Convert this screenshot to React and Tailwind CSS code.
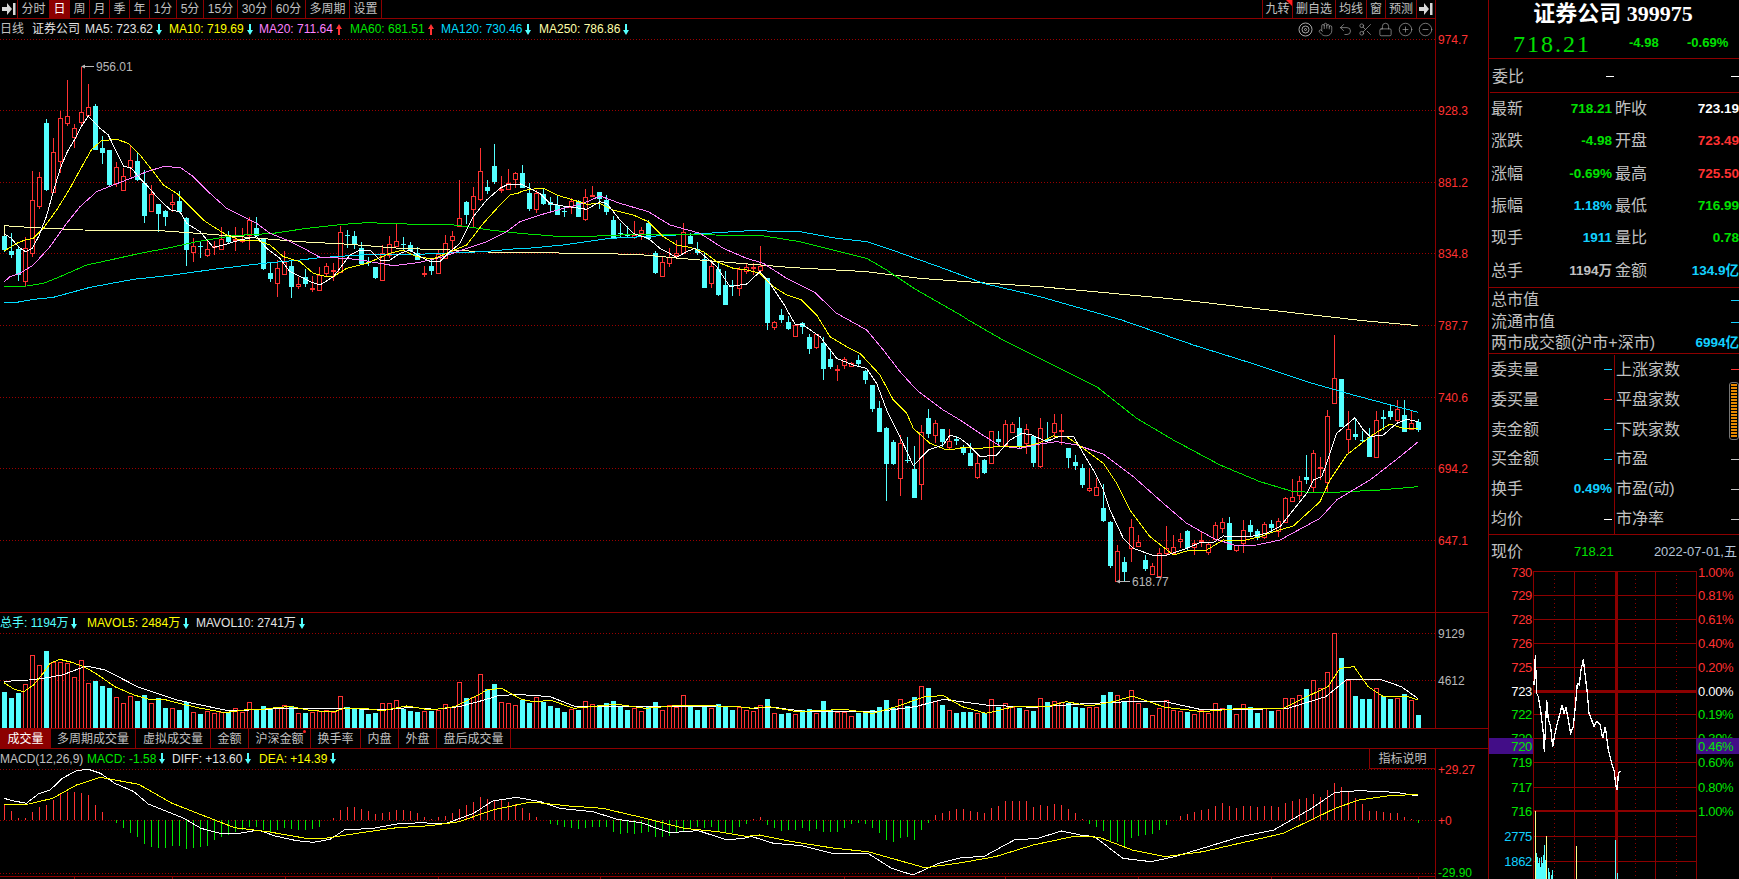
import React from "react";
import { Hand, Undo2, Scissors, Lock, CirclePlus, CircleMinus } from "lucide-react";

const RED = "#ff3232";
const CYAN = "#54ffff";
const GREEN = "#00e600";
const GRID = "#9a0000";
const FRAME = "#8c0000";

// Daily candles: [high, body top, body bottom, low, rising]; each block has its own plot scale.
const candlesA = [
  [520,528,570,575,0],[520,573,585,594,0],[560,567,645,662,0],[530,563,662,678,1],[333,421,578,590,1],[335,352,437,447,1],[178,189,390,392,0],[235,277,395,397,1],[153,175,302,340,1],[60,169,188,197,1],
  [193,205,231,263,1],[20,157,185,197,1],[72,142,164,170,1],[132,138,270,270,0],[228,264,278,312,0],[270,271,375,378,0],[305,322,368,382,1],[325,349,389,389,1],[258,301,321,350,1],[280,303,360,362,0],
  [330,369,467,488,0],[375,403,453,455,1],[432,432,461,515,0],[450,453,470,497,0],[403,427,431,455,1],[393,423,455,458,0],[470,474,570,617,0],[535,559,577,605,1],[545,558,561,594,0],[540,566,584,590,1],
  [543,558,562,585,1],[500,538,566,567,1],[513,527,546,548,0],[502,537,541,573,1],[505,538,543,550,1],[470,481,525,570,1],[472,504,528,530,0],[534,536,628,630,0],[608,639,657,665,0],[600,625,668,710,1],
  [573,605,641,642,1],[600,618,681,714,0],[650,673,678,688,1],[627,652,671,682,0],[648,684,688,695,1],[622,646,690,692,1],[608,618,638,652,1],[608,630,633,663,1],[498,517,635,635,1],[510,525,529,563,0],
  [513,528,554,568,0],[547,564,612,614,0],[590,605,608,618,0],[620,622,654,658,0],[556,580,659,660,1],[528,553,585,595,1],[490,544,557,558,1],[530,552,555,570,0],[545,556,573,575,0],[560,580,599,600,0],
  [618,638,642,650,1],[600,618,633,645,0],[570,582,638,638,1],[525,550,595,597,1],[513,529,541,578,1],[360,475,497,497,1],[423,426,464,492,0],[380,409,446,505,1],[265,334,416,423,1],[360,381,393,402,0],
  [252,318,365,373,0],[348,387,391,400,1],[328,370,386,388,1],[335,340,358,385,1],
];
const candlesB = [
  [-15,8,53,55,0],[40,68,118,122,0],[60,70,117,130,1],[55,72,102,106,0],[82,96,104,130,0],[75,105,135,136,0],[108,123,125,140,0],[85,92,112,133,1],[90,92,140,141,0],[58,80,147,153,1],
  [48,75,78,82,1],[67,67,88,118,0],[75,90,125,135,0],[138,150,205,207,0],[160,190,193,200,0],[168,195,198,203,0],[153,195,202,206,1],[170,181,188,210,1],[150,160,208,210,0],[243,250,309,312,0],
  [258,277,317,317,1],[235,262,278,290,1],[210,250,256,265,1],[158,187,250,252,1],[188,198,222,223,0],[216,238,248,255,0],[250,268,353,354,0],[272,288,338,353,1],[272,298,375,378,0],[303,345,404,405,0],
  [330,345,348,378,0],[292,298,353,378,1],[280,290,303,312,1],[280,290,293,315,1],[228,288,299,300,1],[323,323,459,480,0],[452,455,472,480,1],[417,435,450,458,0],[438,456,477,480,0],[462,465,497,498,1],
  [455,460,470,492,0],[492,501,537,552,0],[492,493,530,538,1],[500,519,597,630,0],[543,568,592,598,0],[585,597,600,634,1],[562,566,585,597,1],[575,580,587,589,1],[555,570,583,590,0],[600,603,630,642,0],
  [645,645,717,725,0],[693,714,785,786,0],[770,775,881,993,0],[810,815,882,885,0],[795,820,925,978,1],[800,870,873,878,0],[828,897,983,984,0],[765,787,943,990,1],[717,745,792,805,0],[750,760,796,818,1],
  [778,778,815,830,0],[778,812,830,838,1],[797,808,812,826,0],
];
const candlesC = [
  [375,383,400,405,0],[368,400,437,438,0],[400,428,470,478,1],[418,420,460,462,0],[333,333,430,432,1],[333,358,365,380,0],[300,313,375,380,1],[305,313,337,340,1],[292,323,378,388,0],[312,328,368,402,1],[347,349,428,440,0],[295,325,437,443,1],
  [305,358,362,365,0],[282,310,335,355,1],[283,330,333,375,1],[385,385,413,443,0],[405,427,437,450,0],[432,445,495,505,0],[443,505,510,515,1],[475,500,524,525,1],[492,564,603,605,0],[603,606,738,745,0],
  [675,694,782,785,1],[712,727,757,785,0],[598,622,683,725,1],[645,667,677,682,1],[706,720,747,752,0],[728,739,762,763,1],[685,700,767,770,1],[618,683,700,705,1],[645,680,700,703,1],[640,658,662,685,1],
  [630,633,684,690,0],[660,670,682,705,1],[636,661,664,680,1],[665,672,695,705,1],[605,616,658,660,1],[594,607,623,640,1],[592,609,689,690,0],[675,676,690,695,1],[600,630,670,698,1],[600,616,635,650,0],
  [628,633,655,660,0],[605,611,650,658,1],[600,613,624,640,0],[595,604,632,650,1],[530,535,605,610,1],[478,532,542,545,1],[468,484,524,540,1],[405,471,480,492,0],[390,400,502,515,1],[410,441,445,480,1],
  [270,289,485,520,1],[45,175,250,252,1],[178,178,320,322,0],[273,328,358,400,1],[293,342,351,360,0],[332,360,362,370,0],[325,350,410,412,0],[273,301,412,413,1],[270,292,296,330,0],[255,273,292,300,0],
  [240,266,300,312,1],[240,286,335,336,0],[273,310,327,330,1],[298,307,330,336,0],
];

const candles = [
  ...candlesA.map((c) => c.map((v, k) => (k < 4 ? 60 + v / 3 : v))),
  ...candlesB.map((c) => c.map((v, k) => (k < 4 ? 170 + v / 3 : v))),
  ...candlesC.map((c) => c.map((v, k) => (k < 4 ? 320 + v / 3 : v))),
];

// Turnover bar tops, oldest first.
const volumeTops = [
  276,294,279,252,165,195,153,185,187,190,232,181,249,243,258,264,292,310,288,303,285,309,295,323,324,330,307,336,342,332,
  340,335,337,324,335,307,330,318,325,322,315,317,340,338,336,332,330,336,289,322,328,328,342,340,310,310,300,327,333,336,
  334,334,330,313,320,247,295,292,222,268,253,306,308,316,300,310,290,305,317,323,336,327,330,304,313,316,310,303,317,330,
  325,333,320,306,330,316,320,285,320,330,320,325,312,320,330,320,330,
  333,316,297,340,342,340,343,330,328,338,303,330,336,336,348,340,340,331,322,300,323,297,318,291,258,264,303,315,330,340,
  335,335,338,340,297,322,310,320,325,330,332,295,305,303,307,310,322,323,320,320,285,276,285,305,270,308,323,345,323,300,
  330,333,337,342,330,338,310,325,315,342,313,322,338,323,332,330,295,295,285,267,240,263,217,100,174,240,288,298,297,265,
  287,297,295,283,300,345,
];

// MACD histogram ends around the zero line (661 on this scale).
const macdBars = [
  615,633,655,653,637,620,615,600,583,575,575,580,585,615,635,661,670,685,700,710,733,740,743,743,738,738,747,745,742,738,
  720,710,705,695,690,680,680,690,695,690,685,688,690,690,688,680,661,655,630,620,620,628,632,643,638,635,630,630,632,640,
  652,656,652,648,640,628,615,605,592,598,600,600,605,612,625,640,650,660,672,675,682,683,688,685,680,680,680,695,702,700,
  702,700,695,710,712,708,700,692,688,682,685,680,695,695,700,680,672,
  658,652,675,685,692,690,690,685,692,688,695,695,695,685,672,670,672,685,700,720,725,715,712,720,690,668,645,640,633,628,
  628,632,635,640,625,617,603,603,603,603,620,615,618,613,615,628,640,658,
  672,680,693,725,725,737,715,708,705,703,690,675,661,648,642,635,630,628,618,610,618,625,618,618,620,618,618,620,608,603,
  598,595,583,590,570,550,562,575,595,612,632,633,637,640,640,652,658,668,
];

// Moving-average traces, one point list per plot scale.
const ma5 = [
  [[13,521],[34,535],[55,560],[76,575],[97,565],[118,525],[139,470],[160,395],[181,325],[202,275],[223,240],[244,200],[265,168],[300,205],[325,225],[370,318],[395,325],[420,355],[440,375],[470,410],[490,430],[512,450],[540,455],[560,490],[600,515],[640,562],[680,552],[720,540],[770,530],[800,565],[840,595],[870,635],[900,650],[930,665],[960,675],[1000,650],[1020,625],[1050,585],[1080,570],[1110,570],[1140,600],[1170,600],[1200,580],[1230,570],[1260,590],[1290,605],[1320,605],[1350,575],[1380,550],[1420,470],[1460,420],[1500,385],[1525,372],[1560,372]],
  [[0,40],[30,55],[60,70],[90,100],[130,108],[160,112],[200,118],[240,95],[260,100],[300,150],[340,190],[385,205],[420,235],[470,262],[500,245],[525,235],[550,255],[590,290],[630,350],[680,342],[720,305],[750,340],[790,400],[825,462],[850,465],[900,500],[950,565],[1000,585],[1040,595],[1070,640],[1100,720],[1140,800],[1180,887],[1225,840],[1270,825],[1290,795],[1320,805]],
  [[0,355],[20,370],[60,410],[110,405],[150,360],[185,340],[215,345],[260,365],[300,348],[340,348],[370,400],[400,450],[430,510],[450,570],[490,655],[520,685],[575,705],[620,705],[680,685],[720,668],[760,668],[790,648],[830,650],[870,650],[920,640],[960,620],[1000,570],[1040,520],[1060,480],[1085,470],[1100,430],[1130,340],[1185,293],[1210,330],[1230,350],[1270,345],[1310,310],[1340,298],[1375,305]],
];
const ma10 = [
  [[13,573],[50,550],[75,540],[100,535],[130,505],[170,450],[210,385],[240,330],[275,268],[305,242],[350,238],[385,250],[420,285],[460,335],[490,375],[530,400],[570,440],[610,480],[640,500],[680,525],[720,540],[770,540],[810,555],[850,590],[900,605],[940,640],[980,650],[1000,650],[1040,625],[1100,610],[1170,580],[1210,570],[1250,590],[1300,597],[1350,575],[1400,555],[1450,490],[1500,435],[1530,405],[1560,398]],
  [[0,65],[30,58],[70,55],[110,75],[160,90],[200,103],[240,100],[280,120],[340,135],[385,155],[430,200],[470,225],[510,232],[550,245],[590,275],[640,295],[680,300],[720,310],[760,350],[800,375],[845,390],[890,435],[930,500],[980,530],[1020,550],[1080,615],[1120,690],[1160,730],[1180,775],[1230,820],[1280,840],[1320,835]],
  [[0,383],[60,385],[110,380],[160,380],[200,378],[240,368],[280,348],[320,350],[370,385],[430,430],[470,490],[510,570],[570,650],[640,705],[690,690],[740,690],[790,660],[850,662],[900,650],[950,632],[1000,618],[1080,545],[1110,480],[1160,405],[1230,350],[1290,312],[1330,325],[1375,325]],
];
const ma20 = [
  [[13,665],[30,650],[60,640],[100,615],[150,560],[200,490],[240,440],[290,395],[340,375],[400,352],[440,335],[490,320],[540,322],[580,350],[630,400],[680,445],[720,465],[770,490],[810,520],[860,540],[920,570],[960,592],[1040,595],[1100,603],[1180,617],[1260,607],[1330,590],[1400,565],[1460,545],[1520,515],[1560,485]],
  [[0,155],[60,135],[120,118],[190,100],[240,78],[300,100],[385,125],[450,165],[540,190],[610,235],[680,265],[730,280],[800,325],[885,368],[950,430],[1040,480],[1090,540],[1140,605],[1190,660],[1270,720]],
  [[0,300],[60,340],[120,378],[180,385],[240,372],[290,365],[350,375],[430,402],[520,470],[610,550],[680,610],[760,655],[830,678],[890,675],[960,660],[1080,595],[1130,540],[1230,480],[1320,410],[1375,365]],
];
const ma60 = [
  [[13,680],[80,678],[130,670],[180,650],[260,615],[330,600],[420,580],[500,565],[590,545],[700,527],[820,520],[920,505],[1030,493],[1100,488],[1220,492],[1340,492],[1400,500],[1470,510],[1560,520]],
  [[0,190],[100,198],[230,198],[350,193],[480,193],[585,195],[725,197],[840,215],[940,240],[1040,265],[1100,300],[1190,360],[1330,440]],
  [[25,0],[120,55],[250,120],[410,200],[530,295],[640,360],[780,435],[900,485],[1000,515],[1100,518],[1260,510],[1375,500]],
];
const ma120 = [
  [[13,727],[50,727],[100,718],[160,712],[270,682],[400,658],[520,645],[640,628],[790,610],[900,600],[960,593],[1080,585],[1250,583],[1450,575],[1560,565]],
  [[0,237],[130,225],[270,205],[430,197],[560,190],[690,182],[840,185],[950,205],[1040,215],[1130,245],[1270,295],[1390,340],[1560,380]],
  [[485,0],[700,75],[860,125],[1040,185],[1180,225],[1375,277]],
];
const ma250 = [
  [[13,528],[13,497],[100,503],[250,510],[480,512],[620,522],[780,535],[900,545],[1050,553],[1200,565],[1350,570],[1500,578],[1560,578]],
  [[0,247],[350,253],[480,265],[660,280],[820,293],[1040,305],[1200,325],[1380,338],[1560,350]],
  [[651,-62],[927,-30],[1209,2],[1375,17]],
];

const toPlot = ([a, b, c]) =>
  [
    ...a.map(([x, y]) => [x / 3, 60 + y / 3]),
    ...b.map(([x, y]) => [520 + x / 3, 170 + y / 3]),
    ...c.map(([x, y]) => [960 + x / 3, 320 + y / 3]),
  ]
    .map((p) => p.join(","))
    .join(" ");

const toLower = (a, b) =>
  [
    ...a.map(([x, y]) => [x / 2.0907, 600 + y / 3]),
    ...b.map(([x, y]) => [750 + x / 2.119, 600 + y / 3]),
  ]
    .map((p) => p.join(","))
    .join(" ");

const volMa5 = toLower(
  [[8,248],[30,268],[50,275],[70,255],[90,220],[105,190],[125,178],[150,187],[175,200],[200,220],[240,260],[280,285],[310,297],[340,297],[380,312],[420,325],[470,338],[510,330],[550,328],[580,322],[610,320],[650,332],[700,335],[720,324],[760,325],[800,332],[850,318],[900,330],[950,320],[1000,285],[1020,268],[1050,266],[1090,298],[1120,306],[1150,300],[1200,325],[1250,318],[1290,313],[1350,325],[1430,315],[1500,318],[1565,322]],
  [[0,325],[40,320],[100,335],[200,328],[260,340],[310,320],[370,290],[410,287],[450,320],[500,340],[560,320],[630,320],[670,305],[720,318],[770,305],[810,288],[880,322],[960,335],[1040,325],[1130,325],[1180,290],[1225,260],[1250,205],[1280,200],[1310,260],[1340,288],[1390,288],[1415,300]]
);
const volMa10 = toLower(
  [[8,245],[30,242],[60,240],[90,235],[130,225],[180,198],[220,210],[290,262],[370,300],[420,315],[470,330],[520,330],[600,325],[660,325],[720,325],[800,330],[860,322],[910,328],[960,320],[1000,305],[1040,288],[1080,283],[1150,290],[1200,318],[1300,318],[1400,320],[1500,318],[1565,322]],
  [[0,325],[50,322],[120,335],[200,335],[270,335],[350,320],[410,298],[500,315],[600,322],[700,312],[800,305],[880,305],[960,330],[1060,328],[1140,325],[1220,290],[1265,238],[1340,240],[1380,260],[1415,295]]
);
const diff = toLower(
  [[8,595],[30,603],[55,610],[80,582],[105,570],[130,535],[160,512],[185,508],[210,520],[240,550],[280,575],[310,612],[350,635],[385,655],[420,685],[460,700],[500,700],[540,690],[575,708],[620,722],[655,727],[690,718],[720,690],[780,685],[830,672],[880,668],[930,672],[990,640],[1030,603],[1080,592],[1130,605],[1170,625],[1240,635],[1290,658],[1340,668],[1400,698],[1460,692],[1520,720],[1565,713]],
  [[0,708],[50,730],[110,737],[180,762],[250,760],[300,805],[345,825],[400,790],[450,772],[495,770],[560,720],[610,715],[660,693],[700,705],[730,710],[790,775],[850,785],[900,770],[970,740],[1040,710],[1110,690],[1190,625],[1240,577],[1290,572],[1370,577],[1415,588]]
);
const dea = toLower(
  [[8,613],[60,612],[110,595],[160,555],[210,532],[290,553],[360,610],[440,655],[490,683],[560,695],[640,715],[680,715],[760,697],[830,683],[900,677],[960,665],[1030,630],[1110,606],[1190,618],[1260,625],[1350,655],[1430,685],[1500,695],[1565,710]],
  [[0,708],[20,705],[90,725],[180,745],[250,755],[300,775],[370,803],[440,790],[520,770],[600,735],[690,708],[740,712],[810,750],[880,770],[960,755],[1130,700],[1240,625],[1290,600],[1350,588],[1415,583]]
);

const Dotted = ({ y }) => (
  <line x1="0" x2="1435" y1={y + 0.5} y2={y + 0.5} stroke={GRID} strokeDasharray="1 2" />
);

const AxisLine = ({ y1, y2 }) => <rect x="1435" y={y1} width="1" height={y2 - y1} fill={FRAME} />;

const Trace = ({ points, color, width = 1 }) => (
  <polyline points={points} fill="none" stroke={color} strokeWidth={width} shapeRendering="crispEdges" />
);

function Candle({ data, i }) {
  const [high, top, bottom, low, up] = data;
  const x = 2 + 7 * i;
  const yTop = Math.round(top);
  const yBottom = Math.max(Math.round(bottom), yTop + 1);
  const color = up ? RED : CYAN;
  return (
    <g shapeRendering="crispEdges">
      <rect x={x + 2} y={Math.round(high)} width="1" height={Math.max(1, Math.round(low) - Math.round(high))} fill={color} />
      {up ? (
        <rect x={x + 0.5} y={yTop + 0.5} width="4" height={yBottom - yTop} fill="#000" stroke={color} />
      ) : (
        <rect x={x} y={yTop} width="5" height={yBottom - yTop} fill={color} />
      )}
    </g>
  );
}

const ArrowDown = () => (
  <svg width="6" height="11" viewBox="0 0 6 11" className="ml-[3px] shrink-0">
    <polygon points="2,0 4,0 4,6 6,6 3,11 0,6 2,6" fill={CYAN} />
  </svg>
);

const ArrowUp = () => (
  <svg width="6" height="11" viewBox="0 0 6 11" className="ml-[3px] shrink-0">
    <polygon points="3,0 6,5 4,5 4,11 2,11 2,5 0,5" fill={RED} />
  </svg>
);

const PanelArrow = () => (
  <svg width="14" height="14" viewBox="0 0 14 14">
    <polygon points="0,5 5,5 5,1 10,7 5,13 5,9 0,9" fill="#d8d8d8" />
    <rect x="11" y="1" width="2.5" height="12" fill="#d8d8d8" />
  </svg>
);

const Tab = ({ className = "", children }) => (
  <div className={`flex h-full items-center justify-center border-r border-[#8c0000] text-[#c0c0c0] ${className}`}>
    {children}
  </div>
);

function Toolbar() {
  return (
    <div className="flex h-[19px] w-[1436px] justify-between border-r border-b border-[#8c0000] text-[12px]">
      <div className="flex h-full">
        <Tab className="w-[18px]"><PanelArrow /></Tab>
        <Tab className="w-[32px]">分时</Tab>
        <div className="flex h-full w-[20px] items-center justify-center border-r border-[#8c0000] bg-[#8c0000] text-white">日</div>
        <Tab className="w-[20px]">周</Tab>
        <Tab className="w-[20px]">月</Tab>
        <Tab className="w-[20px]">季</Tab>
        <Tab className="w-[20px]">年</Tab>
        <Tab className="w-[27px]">1分</Tab>
        <Tab className="w-[27px]">5分</Tab>
        <Tab className="w-[34px]">15分</Tab>
        <Tab className="w-[34px]">30分</Tab>
        <Tab className="w-[34px]">60分</Tab>
        <Tab className="w-[44px]">多周期</Tab>
        <Tab className="w-[32px]">设置</Tab>
      </div>
      <div className="flex h-full">
        <div className="relative flex h-full w-[31px] items-center justify-center border-x border-[#8c0000] text-[#c0c0c0]">
          九转
          <span className="absolute top-0 right-0 h-0 w-0 border-t-[6px] border-l-[6px] border-t-[#ff2020] border-l-transparent" />
        </div>
        <Tab className="w-[43px]">删自选</Tab>
        <Tab className="w-[31px]">均线</Tab>
        <Tab className="w-[19px]">窗</Tab>
        <Tab className="w-[31px]">预测</Tab>
        <div className="flex h-full w-[18px] items-center justify-center"><PanelArrow /></div>
      </div>
    </div>
  );
}

function PriceLegend() {
  return (
    <div className="absolute top-0 left-0 flex h-[20px] items-center text-[12px]">
      <span className="w-[32px] text-[#c0c0c0]">日线</span>
      <span className="w-[53px] text-[#e4e4e4]">证券公司</span>
      <div className="flex w-[84px] items-center text-[#e4e4e4]">MA5: 723.62<ArrowDown /></div>
      <div className="flex w-[90px] items-center text-[#ffff00]">MA10: 719.69<ArrowDown /></div>
      <div className="flex w-[91px] items-center text-[#ff80ff]">MA20: 711.64<ArrowUp /></div>
      <div className="flex w-[91px] items-center text-[#00e600]">MA60: 681.51<ArrowUp /></div>
      <div className="flex w-[98px] items-center text-[#00dcff]">MA120: 730.46<ArrowDown /></div>
      <div className="flex items-center text-[#ffffa8]">MA250: 786.86<ArrowDown /></div>
    </div>
  );
}

function ChartTools() {
  const icon = { size: 15, strokeWidth: 1.1 };
  return (
    <div className="absolute top-[2px] right-[55px] flex h-[16px] items-center gap-[5px] text-[#a8a8a8]">
      <svg width="15" height="15" viewBox="0 0 15 15" fill="none" stroke="currentColor">
        <circle cx="7.5" cy="7.5" r="6.5" />
        <circle cx="7.5" cy="7.5" r="3.5" />
        <circle cx="7.5" cy="7.5" r="1" />
      </svg>
      <Hand {...icon} />
      <Undo2 {...icon} />
      <Scissors {...icon} />
      <Lock {...icon} />
      <CirclePlus {...icon} />
      <CircleMinus {...icon} />
    </div>
  );
}

function PricePanel() {
  const grid = [
    [39, "974.7"], [110, "928.3"], [182, "881.2"], [253, "834.8"],
    [325, "787.7"], [397, "740.6"], [468, "694.2"], [540, "647.1"],
  ];
  return (
    <div className="relative h-[594px] border-b border-[#8c0000]">
      <svg width="1488" height="593" viewBox="0 19 1488 593" className="block">
        <AxisLine y1={19} y2={612} />
        {grid.map(([y, label]) => (
          <g key={y}>
            <Dotted y={y} />
            <text x="1438" y={y + 5} fontSize="12" fill={RED}>{label}</text>
          </g>
        ))}
        {candles.map((c, i) => <Candle key={i} data={c} i={i} />)}
        <Trace points={toPlot(ma250)} color="#ffffa8" />
        <Trace points={toPlot(ma120)} color="#00dcff" />
        <Trace points={toPlot(ma60)} color="#00e600" />
        <Trace points={toPlot(ma20)} color="#ff80ff" />
        <Trace points={toPlot(ma10)} color="#ffff00" />
        <Trace points={toPlot(ma5)} color="#ffffff" />
        <g fill="#b8b8b8">
          <rect x="82" y="66" width="12" height="1" />
          <polygon points="81,66.5 85,64.5 85,68.5" />
          <text x="96" y="71" fontSize="12">956.01</text>
          <rect x="1117" y="581" width="13" height="1" />
          <polygon points="1116,581.5 1120,579.5 1120,583.5" />
          <text x="1132" y="586" fontSize="12">618.77</text>
        </g>
      </svg>
      <PriceLegend />
      <ChartTools />
    </div>
  );
}

function VolumePanel() {
  return (
    <div className="relative h-[116px] border-b border-[#8c0000]">
      <svg width="1488" height="115" viewBox="0 613 1488 115" className="block">
        <AxisLine y1={613} y2={728} />
        <Dotted y={633} />
        <Dotted y={680} />
        <text x="1438" y="638" fontSize="12" fill="#b8b8b8">9129</text>
        <text x="1438" y="685" fontSize="12" fill="#b8b8b8">4612</text>
        {volumeTops.map((v, i) => {
          const y = Math.round(600 + v / 3);
          return candles[i][4] ? (
            <rect key={i} x={2.5 + 7 * i} y={y + 0.5} width="4" height={728 - y} fill="#000" stroke={RED} shapeRendering="crispEdges" />
          ) : (
            <rect key={i} x={2 + 7 * i} y={y} width="5" height={728 - y} fill={CYAN} shapeRendering="crispEdges" />
          );
        })}
        <Trace points={volMa10} color="#ffffff" />
        <Trace points={volMa5} color="#ffff00" />
      </svg>
      <div className="absolute top-0 left-0 flex h-[20px] items-center text-[12px]">
        <div className="flex w-[87px] items-center text-[#54ffff]">总手: 1194万<ArrowDown /></div>
        <div className="flex w-[109px] items-center text-[#ffff00]">MAVOL5: 2484万<ArrowDown /></div>
        <div className="flex items-center text-[#e4e4e4]">MAVOL10: 2741万<ArrowDown /></div>
      </div>
    </div>
  );
}

function VolumeTabs() {
  return (
    <div className="flex h-[20px] border-b border-[#8c0000] text-[12px]">
      <div className="flex h-full w-[51px] items-center justify-center bg-[#8c0000] text-white">成交量</div>
      <Tab className="w-[85px]">多周期成交量</Tab>
      <Tab className="w-[75px]">虚拟成交量</Tab>
      <Tab className="w-[38px]">金额</Tab>
      <div className="relative flex h-full w-[62px] items-center justify-center border-r border-[#8c0000] text-[#c0c0c0]">
        沪深金额
        <span className="absolute top-[1px] right-[4px] h-[3px] w-[3px] rounded-full bg-[#ff2020]" />
      </div>
      <Tab className="w-[50px]">换手率</Tab>
      <Tab className="w-[38px]">内盘</Tab>
      <Tab className="w-[38px]">外盘</Tab>
      <Tab className="w-[74px]">盘后成交量</Tab>
    </div>
  );
}

function MacdPanel() {
  const zero = Math.round(600 + 661 / 3);
  const ticks = [74, 172, 285, 438, 600, 844, 1005, 1138, 1271, 1418];
  return (
    <div className="relative h-[130px]">
      <svg width="1488" height="130" viewBox="0 749 1488 130" className="block">
        <AxisLine y1={749} y2={879} />
        <Dotted y={769} />
        <Dotted y={820} />
        <Dotted y={873} />
        <text x="1438" y="774" fontSize="12" fill={RED}>+29.27</text>
        <text x="1438" y="825" fontSize="12" fill={RED}>+0</text>
        <text x="1438" y="877" fontSize="12" fill={GREEN}>-29.90</text>
        {macdBars.map((v, i) => {
          if (v === 661) return null;
          const y = Math.round(600 + v / 3);
          return (
            <rect
              key={i}
              x={4 + 7 * i}
              y={Math.min(y, zero)}
              width="1"
              height={Math.abs(y - zero)}
              fill={v < 661 ? RED : GREEN}
              shapeRendering="crispEdges"
            />
          );
        })}
        <Trace points={diff} color="#ffffff" />
        <Trace points={dea} color="#ffff00" />
        <rect x="0" y="876" width="1435" height="1" fill={FRAME} />
        {ticks.map((x) => <rect key={x} x={x} y="877" width="1" height="2" fill={FRAME} />)}
      </svg>
      <div className="absolute top-0 left-0 flex h-[19px] items-center text-[12px]">
        <span className="w-[87px] text-[#c0c0c0]">MACD(12,26,9)</span>
        <div className="flex w-[85px] items-center text-[#00e600]">MACD: -1.58<ArrowDown /></div>
        <div className="flex w-[87px] items-center text-[#e4e4e4]">DIFF: +13.60<ArrowDown /></div>
        <div className="flex items-center text-[#ffff00]">DEA: +14.39<ArrowDown /></div>
      </div>
      <div className="absolute top-0 left-[1369px] flex h-[20px] w-[66px] items-center justify-center border-b border-l border-[#8c0000] text-[12px] text-[#c0c0c0]">
        指标说明
      </div>
    </div>
  );
}

const Dash = ({ className }) => <span className={`h-px w-[8px] ${className}`} />;

const quotes = [
  ["最新", "718.21", "text-[#00e000]", "昨收", "723.19", "text-white"],
  ["涨跌", "-4.98", "text-[#00e000]", "开盘", "723.49", "text-[#ff3232]"],
  ["涨幅", "-0.69%", "text-[#00e000]", "最高", "725.50", "text-[#ff3232]"],
  ["振幅", "1.18%", "text-[#12d0ff]", "最低", "716.99", "text-[#00e000]"],
  ["现手", "1911", "text-[#12d0ff]", "量比", "0.78", "text-[#00e000]"],
  ["总手", "1194万", "text-[#c0c0c0]", "金额", "134.9亿", "text-[#12d0ff]"],
];

const leftDepth = [
  ["委卖量", <Dash key="a" className="bg-[#12d0ff]" />],
  ["委买量", <Dash key="b" className="bg-[#ff3232]" />],
  ["卖金额", <Dash key="c" className="bg-[#12d0ff]" />],
  ["买金额", <Dash key="d" className="bg-[#12d0ff]" />],
  ["换手", <span key="e" className="text-[13.5px] font-bold text-[#12d0ff]">0.49%</span>],
  ["均价", <Dash key="f" className="bg-white" />],
];

const rightDepth = [
  ["上涨家数", "bg-[#ff3232]"],
  ["平盘家数", "bg-white"],
  ["下跌家数", "bg-[#00e000]"],
  ["市盈", "bg-[#c0c0c0]"],
  ["市盈(动)", "bg-[#c0c0c0]"],
  ["市净率", "bg-[#c0c0c0]"],
];

const miniLevels = [
  [572, "730", "1.00%", RED],
  [595, "729", "0.81%", RED],
  [619, "728", "0.61%", RED],
  [643, "726", "0.40%", RED],
  [667, "725", "0.20%", RED],
  [691, "723", "0.00%", "#ffffff"],
  [714, "722", "0.19%", GREEN],
  [738, "720", "0.39%", GREEN],
  [762, "719", "0.60%", GREEN],
  [787, "717", "0.80%", GREEN],
  [811, "716", "1.00%", GREEN],
];

const tickLine = [[162,345],[166,255],[170,370],[175,380],[183,430],[190,490],[193,545],[196,480],[200,390],[205,450],[212,470],[218,530],[225,490],[232,460],[240,430],[246,405],[252,430],[258,412],[265,450],[272,490],[280,470],[287,400],[292,340],[298,345],[303,300],[310,268],[316,320],[322,370],[327,430],[335,450],[342,470],[350,455],[360,462],[368,505],[376,470],[385,540],[395,580],[402,600],[408,650],[412,660],[415,610],[421,602]]
  .map(([x, y]) => `${1480 + x / 3},${570 + y / 3}`)
  .join(" ");

const tickVolume = [
  [165,722,"#ffff88"],[199,798,"#ffff88"],[289,828,"#ffff88"],[168,850,CYAN],[171,860,CYAN],[174,880,CYAN],[177,865,CYAN],[180,890,CYAN],[183,860,CYAN],[186,880,CYAN],[190,855,CYAN],[193,825,CYAN],[196,870,CYAN],[203,895,CYAN],[206,905,CYAN],[212,915,CYAN],[217,900,CYAN],[406,810,CYAN],[412,910,CYAN],
];

function MiniChart() {
  return (
    <svg width="250" height="308" viewBox="1489 571 250 308" className="block overflow-visible">
      <rect x="1533" y="571" width="163" height="1" fill={FRAME} />
      {[595, 619, 643, 667, 714, 738, 762, 787, 836, 861].map((y) => (
        <rect key={y} x="1533" y={y} width="163" height="1" fill={FRAME} />
      ))}
      <rect x="1533" y="690" width="163" height="3" fill={FRAME} />
      <rect x="1533" y="810" width="163" height="2" fill={FRAME} />
      {[1533, 1574, 1655, 1696].map((x) => (
        <rect key={x} x={x} y="571" width="1" height="308" fill={FRAME} />
      ))}
      <rect x="1615" y="571" width="3" height="308" fill={FRAME} />
      {[1554, 1595, 1635, 1676].map((x) => (
        <line key={x} x1={x + 0.5} x2={x + 0.5} y1="571" y2="879" stroke={FRAME} strokeDasharray="1 3" />
      ))}
      {miniLevels.map(([y, a, b, color]) => (
        <g key={y} fontSize="13" fill={color} letterSpacing="-0.3">
          <text x="1532" y={y + 5} textAnchor="end">{a}</text>
          <text x="1698" y={y + 5}>{b}</text>
        </g>
      ))}
      <rect x="1489" y="738" width="44" height="16" fill="#420d87" />
      <rect x="1696" y="738" width="43" height="16" fill="#420d87" />
      <g fontSize="13" fill={GREEN} letterSpacing="-0.3">
        <text x="1532" y="751" textAnchor="end">720</text>
        <text x="1698" y="751">0.46%</text>
      </g>
      <g fontSize="13" fill="#12d0ff" letterSpacing="-0.3">
        <text x="1532" y="841" textAnchor="end">2775</text>
        <text x="1532" y="866" textAnchor="end">1862</text>
      </g>
      {tickVolume.map(([x, y, color]) => (
        <rect key={x} x={Math.round(1480 + x / 3)} y={Math.round(570 + y / 3)} width="1" height="100" fill={color} />
      ))}
      <polyline points={tickLine} fill="none" stroke="#ffffff" strokeWidth="1.3" shapeRendering="crispEdges" />
    </svg>
  );
}

function Sidebar() {
  return (
    <aside className="flex h-[879px] w-[251px] flex-col border-l border-[#8c0000] text-[16px] text-[#c0c0c0]">
      <header className="h-[59px] shrink-0 border-b border-[#8c0000]">
        <div className="flex h-[26px] items-center justify-center pr-[2px] font-['Liberation_Serif','Noto_Sans_CJK_SC',serif] text-[22px] font-bold text-white">
          证券公司 399975
        </div>
        <div className="relative h-[32px] font-bold text-[#00e000]">
          <span className="absolute top-[0px] left-[24px] font-['Liberation_Serif',serif] text-[24px] font-normal tracking-[2px]">718.21</span>
          <span className="absolute top-[7px] left-[140px] text-[13px]">-4.98</span>
          <span className="absolute top-[7px] left-[198px] text-[13px]">-0.69%</span>
        </div>
      </header>

      <div className="ml-[1px] flex h-[34px] shrink-0 items-center border-b border-[#8c0000] pt-[2px]">
        <span className="w-[116px] pl-[2px]">委比</span>
        <Dash className="bg-white" />
        <span className="flex-1" />
        <Dash className="bg-white" />
      </div>

      <div className="grid h-[195px] shrink-0 grid-rows-6 border-b border-[#8c0000] text-[13.5px] font-bold">
        {quotes.map(([a, av, ac, b, bv, bc]) => (
          <div key={a} className="flex items-center">
            <div className="flex w-[124px] items-center justify-between pr-[1px] pl-[2px]">
              <span className="text-[16px] font-normal text-[#c0c0c0]">{a}</span>
              <span className={ac}>{av}</span>
            </div>
            <div className="ml-[2px] flex flex-1 items-center justify-between">
              <span className="text-[16px] font-normal text-[#c0c0c0]">{b}</span>
              <span className={bc}>{bv}</span>
            </div>
          </div>
        ))}
      </div>

      <div className="h-[66px] shrink-0 border-b border-[#8c0000] pt-[1px] pl-[2px]">
        <div className="flex h-[22px] items-center justify-between">总市值<Dash className="bg-[#12d0ff]" /></div>
        <div className="flex h-[22px] items-center justify-between">流通市值<Dash className="bg-[#12d0ff]" /></div>
        <div className="flex h-[20px] items-center justify-between">
          两市成交额(沪市+深市)
          <span className="text-[13.5px] font-bold text-[#12d0ff]">6994亿</span>
        </div>
      </div>

      <div className="relative flex h-[181px] shrink-0 border-b border-[#8c0000] pt-[1px]">
        <div className="grid w-[126px] grid-rows-6 border-r border-[#8c0000] pr-[2px] pl-[2px]">
          {leftDepth.map(([label, value]) => (
            <div key={label} className="flex items-center justify-between">{label}{value}</div>
          ))}
        </div>
        <div className="grid flex-1 grid-rows-6">
          {rightDepth.map(([label, dash]) => (
            <div key={label} className="flex items-center justify-between pl-[1px]">{label}<Dash className={dash} /></div>
          ))}
        </div>
        <div className="absolute top-[28px] left-[240px] h-[58px] w-[10px] rounded-[3px] border border-[#777] bg-black p-[1px]">
          <div className="h-full w-full bg-[repeating-linear-gradient(#e88a00_0_2px,#000_2px_3px)]" />
        </div>
      </div>

      <div className="relative flex h-[36px] shrink-0 items-center pb-[2px] text-[13px]">
        <span className="ml-[2px] w-[83px] text-[16px]">现价</span>
        <span className="text-[#00e000]">718.21</span>
        <span className="absolute right-[2px] text-[#b4c4d8]">2022-07-01,五</span>
      </div>

      <MiniChart />
    </aside>
  );
}

export default function App() {
  return (
    <div className="flex h-[879px] w-[1739px] overflow-hidden bg-black font-['Liberation_Sans','Noto_Sans_CJK_SC',sans-serif] text-[12px]">
      <main className="h-[879px] w-[1488px] shrink-0">
        <Toolbar />
        <PricePanel />
        <VolumePanel />
        <VolumeTabs />
        <MacdPanel />
      </main>
      <Sidebar />
    </div>
  );
}
